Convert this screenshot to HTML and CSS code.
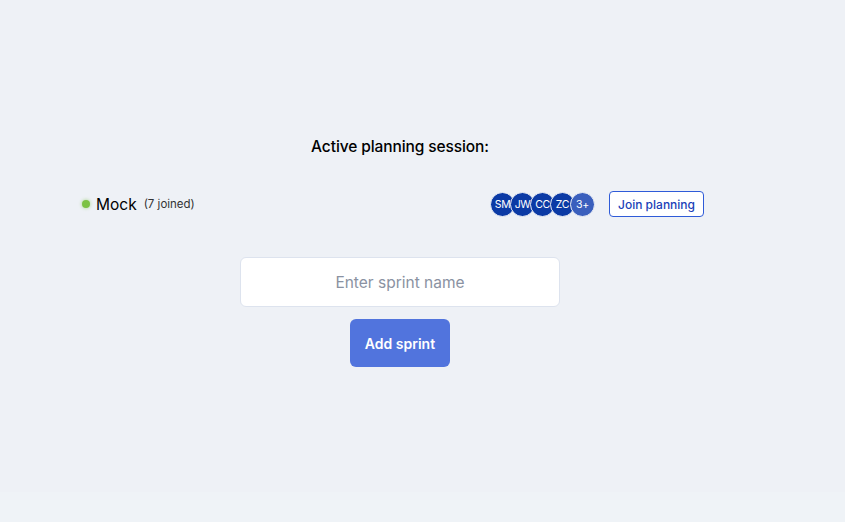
FILE: index.html
```html
<!DOCTYPE html>
<html>
<head>
<meta charset="utf-8">
<link rel="stylesheet" href="styles.css">
</head>
<body>
<div class="page">
  <main class="main">
    <h2 class="title">Active planning session:</h2>
    <div class="session">
      <div class="session-left">
        <span class="dot"></span>
        <span class="name">Mock</span>
        <span class="joined">(7 joined)</span>
      </div>
      <div class="session-right">
        <div class="avatars">
          <span class="avatar">SM</span>
          <span class="avatar">JW</span>
          <span class="avatar">CC</span>
          <span class="avatar">ZC</span>
          <span class="avatar more">3+</span>
        </div>
        <button class="join">Join planning</button>
      </div>
    </div>
    <div class="form">
      <input class="sprint-input" type="text" placeholder="Enter sprint name">
      <button class="add">Add sprint</button>
    </div>
  </main>
  <div class="footer"></div>
</div>
</body>
</html>
```
FILE: styles.css
```css
* { box-sizing: border-box; }
html, body { margin: 0; padding: 0; }
body {
  font-family: Inter, "Noto Sans", sans-serif;
  background: #eff3f7;
  color: #111;
}
.page { width: 845px; }
.main {
  height: 492px;
  background: #eef1f6;
  display: flex;
  flex-direction: column;
  align-items: center;
  padding-top: 137px;
  padding-right: 45px;
}
.title {
  margin: 0;
  font-size: 15.5px;
  font-weight: 500;
  line-height: 20px;
  color: #000;
  letter-spacing: -0.1px;
}
.session {
  width: 624px;
  margin-top: 34px;
  margin-right: 16px;
  display: flex;
  justify-content: space-between;
  align-items: center;
  height: 26px;
}
.session-left { display: flex; align-items: center; }
.dot {
  width: 8px; height: 8px; border-radius: 50%;
  background: #7cc244;
  box-shadow: 0 0 3px 1px rgba(124,194,68,0.35);
  margin-left: 2px;
  margin-right: 6px;
}
.name { font-size: 15.5px; color: #000; }
.joined { font-size: 11.5px; color: #333; margin-left: 7px; }
.session-right { display: flex; align-items: center; }
.avatars { display: flex; margin-right: 14px; }
.avatar {
  width: 25px; height: 25px; border-radius: 50%;
  background: #0b3aa5;
  color: #fff;
  font-size: 10.5px;
  display: flex; align-items: center; justify-content: center;
  border: 1px solid #eef1f6;
  margin-left: -5px;
  letter-spacing: -0.3px;
}
.avatar:first-child { margin-left: 0; }
.avatar.more { background: #3a5fbd; }
.join {
  font-family: inherit;
  height: 26px;
  padding: 0 8px;
  background: #fff;
  border: 1px solid #2f5bd8;
  border-radius: 4px;
  color: #1a3fb8;
  font-size: 12px;
  font-weight: 500;
}
.form {
  margin-top: 40px;
  display: flex;
  flex-direction: column;
  align-items: center;
  gap: 12px;
}
.sprint-input {
  width: 320px; height: 50px;
  border: 1px solid #dde3ee;
  border-radius: 6px;
  background: #fff;
  text-align: center;
  font-family: inherit;
  font-size: 15.5px;
  outline: none;
}
.sprint-input::placeholder { color: #8a92a2; }
.add {
  width: 100px; height: 48px;
  background: #5174dd;
  color: #fff;
  border: none;
  border-radius: 6px;
  font-family: inherit;
  font-size: 14px;
  font-weight: 600;
}
.footer { height: 30px; background: #eff3f7; }
```
